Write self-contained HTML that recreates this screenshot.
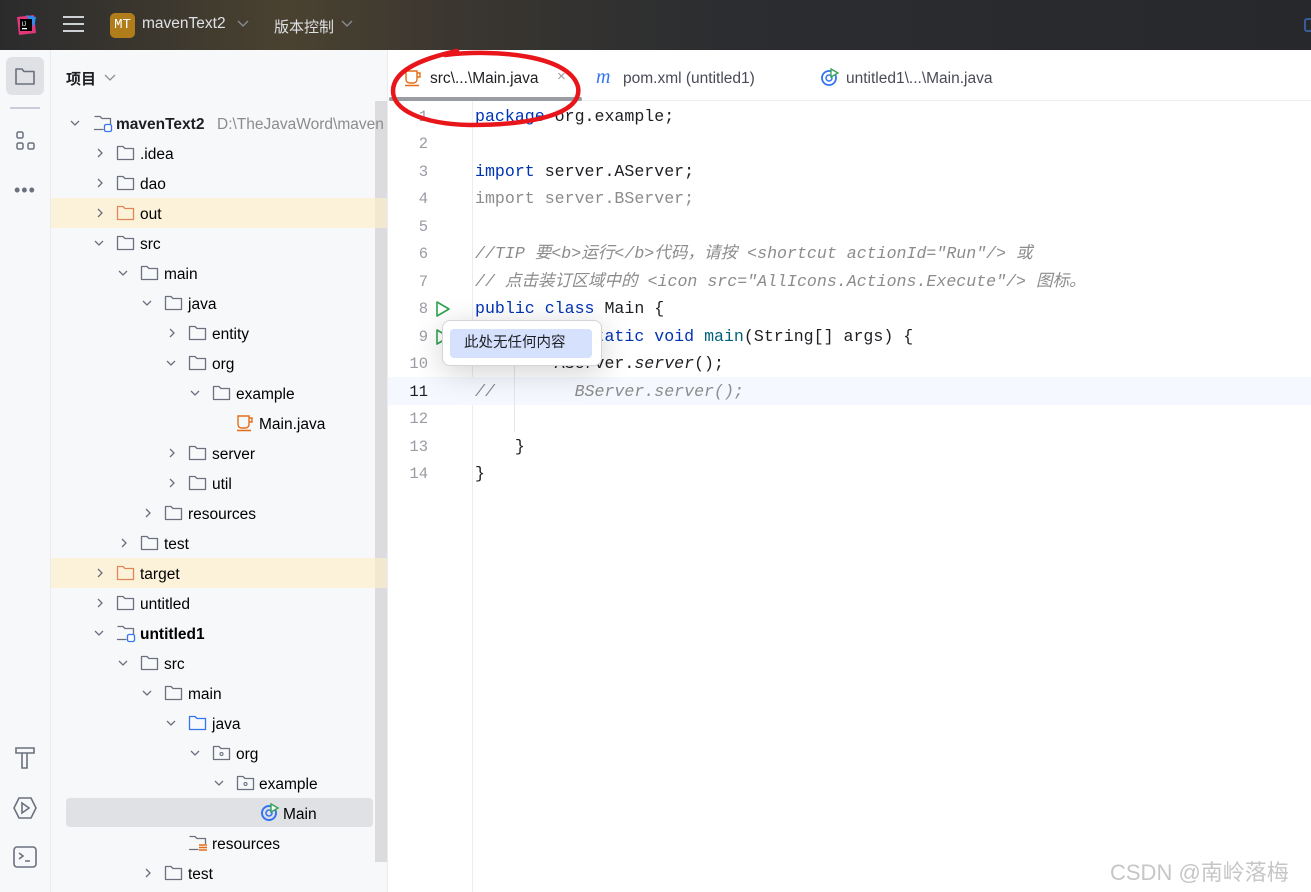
<!DOCTYPE html>
<html><head><meta charset="utf-8"><style>
*{margin:0;padding:0;box-sizing:border-box}
body{width:1311px;height:892px;overflow:hidden;position:relative;background:#fff;font-family:"Liberation Sans","Noto Sans CJK SC",sans-serif;font-size:15px;color:#1e1f22}
.top{position:absolute;left:0;top:0;width:1311px;height:50px;background:linear-gradient(90deg,#2b2b2d 0%,#4a4230 22%,#3a3630 35%,#2b2d30 55%,#27282c 100%)}
.abs{position:absolute}
.left{position:absolute;left:0;top:50px;width:51px;height:842px;background:#f7f8fa;border-right:1px solid #ebecf0}
.proj{position:absolute;left:51px;top:50px;width:337px;height:842px;background:#f7f8fa;border-right:1px solid #ebecf0}
.code{position:absolute;left:475px;font-family:"Liberation Mono","Noto Sans CJK SC",monospace;font-size:16.6px;white-space:pre;line-height:20px}
.ln{position:absolute;width:40px;left:388px;text-align:right;font-family:"Liberation Mono",monospace;font-size:15.5px;color:#9a9ca3;line-height:20px}
.kw{color:#0033b3}.cm{color:#8c8c8c;font-style:italic}.gr{color:#8c8c8c}.fn{color:#00627a}
</style></head><body>
<div class="top"></div>
<svg class="abs" style="left:14px;top:13px" width="24" height="24" viewBox="0 0 24 24"><path d="M3 4 L20 2 L22 20 L5 22Z" fill="#e2367a"/><path d="M12 2 L22 4 L20 14Z" fill="#2d8cf0"/><rect x="6" y="6" width="12" height="12" fill="#000"/><text x="7.5" y="13" font-size="6" fill="#fff" font-family="Liberation Sans">IJ</text><rect x="8" y="15" width="5" height="1.3" fill="#fff"/></svg>
<div class="abs" style="left:63px;top:16px;width:21px;height:2px;background:#ced0d6;box-shadow:0 7px 0 #ced0d6,0 14px 0 #ced0d6"></div>
<div class="abs" style="left:110px;top:13px;width:25px;height:25px;background:#b07d1a;border-radius:5px;color:#fff;font-family:'Liberation Mono';font-size:14px;line-height:25px;text-align:center">MT</div>
<div class="abs" style="left:142px;top:15px;color:#dfe1e5;font-size:15.5px">mavenText2</div>
<svg class="abs" style="left:237px;top:20px" width="12" height="8"><path d="M1 1 L6 6 L11 1" fill="none" stroke="#8c8f96" stroke-width="1.3"/></svg>
<div class="abs" style="left:274px;top:16px;color:#dfe1e5;font-size:15px">版本控制</div>
<svg class="abs" style="left:341px;top:20px" width="12" height="8"><path d="M1 1 L6 6 L11 1" fill="none" stroke="#8c8f96" stroke-width="1.3"/></svg>
<div class="abs" style="left:1304px;top:18px;width:10px;height:14px;border:2px solid #3b5a9a;border-radius:3px"></div>

<div class="left"></div>
<div class="abs" style="left:6px;top:57px;width:38px;height:38px;background:#dfe1e5;border-radius:6px"></div>
<svg class="abs" style="left:14px;top:66px" width="22" height="20" viewBox="0 0 22 20"><path d="M2 3 H8 L10 5.5 H20 V18 H2Z" fill="none" stroke="#6c707e" stroke-width="1.6" stroke-linejoin="round"/></svg>
<div class="abs" style="left:10px;top:107px;width:30px;height:2px;background:#c9ccd6"></div>
<svg class="abs" style="left:15px;top:130px" width="22" height="22" viewBox="0 0 22 22" fill="none" stroke="#6c707e" stroke-width="1.5"><rect x="2" y="2" width="6" height="6" rx="1.5"/><rect x="2" y="13" width="6" height="6" rx="1.5"/><rect x="13" y="13" width="6" height="6" rx="1.5"/></svg>
<div class="abs" style="left:14px;top:180px;color:#6c707e;font-size:18px;letter-spacing:1px">•••</div>
<svg class="abs" style="left:13px;top:745px" width="24" height="26" viewBox="0 0 24 26" fill="none" stroke="#6c707e" stroke-width="1.6"><path d="M3 3 H21 V8 H3Z M9 8 V23 H14 V8"/></svg>
<svg class="abs" style="left:12px;top:795px" width="26" height="26" viewBox="0 0 26 26" fill="none" stroke="#6c707e" stroke-width="1.6"><path d="M7 3 H19 L24 13 L19 23 H7 L2 13Z"/><path d="M10 8 L17 13 L10 18Z"/></svg>
<svg class="abs" style="left:13px;top:846px" width="24" height="22" viewBox="0 0 24 22" fill="none" stroke="#6c707e" stroke-width="1.6"><rect x="1" y="1" width="22" height="20" rx="3"/><path d="M6 7 L10 10 L6 13 M12 15 H17"/></svg>

<div class="proj"></div>
<div class="abs" style="left:66px;top:68px;font-weight:bold;font-size:15px">项目</div>
<svg class="abs" style="left:104px;top:74px" width="12" height="8"><path d="M1 1 L6 6 L11 1" fill="none" stroke="#8c8f96" stroke-width="1.3"/></svg>
<div class="abs" style="left:375px;top:101px;width:12px;height:761px;background:#dcdcde"></div>
<div class="abs" style="left:51px;top:198px;width:324px;height:30px;background:#fcf1d9"></div>
<div class="abs" style="left:375px;top:198px;width:12px;height:30px;background:#f2e8d0"></div>
<div class="abs" style="left:51px;top:558px;width:324px;height:30px;background:#fcf1d9"></div>
<div class="abs" style="left:375px;top:558px;width:12px;height:30px;background:#f2e8d0"></div>
<div class="abs" style="left:66px;top:798px;width:307px;height:29px;background:#dfe1e5;border-radius:4px"></div>

<svg class="abs" style="left:0;top:0" width="388" height="892" font-family="Liberation Sans" font-size="15.5">
<defs>
<g id="fd"><path d="M0.5 1.5 H6 L8 3.5 H16.5 V14.5 H0.5Z" fill="none" stroke="#6c707e" stroke-width="1.3" stroke-linejoin="round"/></g>
<g id="fo"><path d="M0.5 1.5 H6 L8 3.5 H16.5 V14.5 H0.5Z" fill="none" stroke="#e08855" stroke-width="1.3" stroke-linejoin="round"/></g>
<g id="fb"><path d="M0.5 1.5 H6 L8 3.5 H16.5 V14.5 H0.5Z" fill="none" stroke="#3574f0" stroke-width="1.3" stroke-linejoin="round"/></g>
<g id="fp"><path d="M0.5 1.5 H6 L8 3.5 H16.5 V14.5 H0.5Z" fill="none" stroke="#6c707e" stroke-width="1.3" stroke-linejoin="round"/><circle cx="8.5" cy="9" r="1.5" fill="none" stroke="#6c707e" stroke-width="1.1"/></g>
<g id="fm"><path d="M0.5 1.5 H6 L8 3.5 H16.5 V9 M9 14.5 H0.5Z" fill="none" stroke="#6c707e" stroke-width="1.3" stroke-linejoin="round"/><rect x="10.5" y="9.5" width="7" height="7" rx="1.5" fill="#fff" stroke="#3574f0" stroke-width="1.3"/></g>
<g id="fr"><path d="M0.5 1.5 H6 L8 3.5 H16.5 V9 M9 14.5 H0.5Z" fill="none" stroke="#6c707e" stroke-width="1.3" stroke-linejoin="round"/><path d="M10 10 H18 M10 12.5 H18 M10 15 H18" stroke="#e66d17" stroke-width="1.5"/></g>
<path id="cr" d="M0 -4 L4 0 L0 4" fill="none" stroke="#6c707e" stroke-width="1.3"/>
<path id="cd" d="M-4 -2 L0 2 L4 -2" fill="none" stroke="#6c707e" stroke-width="1.3"/>
</defs>
<use href="#cd" x="75" y="123"/><use href="#fm" x="94" y="115"/><text x="116" y="129" font-weight="bold" fill="#1e1f22">mavenText2</text><text x="217" y="129" fill="#8c8c8c">D:\TheJavaWord\maven</text>
<use href="#cr" x="98" y="153"/><use href="#fd" x="117" y="145"/><text x="140" y="159">.idea</text>
<use href="#cr" x="98" y="183"/><use href="#fd" x="117" y="175"/><text x="140" y="189">dao</text>
<use href="#cr" x="98" y="213"/><use href="#fo" x="117" y="205"/><text x="140" y="219">out</text>
<use href="#cd" x="99" y="243"/><use href="#fd" x="117" y="235"/><text x="140" y="249">src</text>
<use href="#cd" x="123" y="273"/><use href="#fd" x="141" y="265"/><text x="164" y="279">main</text>
<use href="#cd" x="147" y="303"/><use href="#fd" x="165" y="295"/><text x="188" y="309">java</text>
<use href="#cr" x="170" y="333"/><use href="#fd" x="189" y="325"/><text x="212" y="339">entity</text>
<use href="#cd" x="171" y="363"/><use href="#fd" x="189" y="355"/><text x="212" y="369">org</text>
<use href="#cd" x="195" y="393"/><use href="#fd" x="213" y="385"/><text x="236" y="399">example</text>
<g transform="translate(237,414)" fill="none" stroke="#e66d17" stroke-width="1.4"><path d="M1 2 H12 V10 Q12 14 8 14 H5 Q1 14 1 10Z M12 4 H15 V8 H12 M0 16.5 H14"/></g><text x="259" y="429">Main.java</text>
<use href="#cr" x="170" y="453"/><use href="#fd" x="189" y="445"/><text x="212" y="459">server</text>
<use href="#cr" x="170" y="483"/><use href="#fd" x="189" y="475"/><text x="212" y="489">util</text>
<use href="#cr" x="146" y="513"/><use href="#fd" x="165" y="505"/><text x="188" y="519">resources</text>
<use href="#cr" x="122" y="543"/><use href="#fd" x="141" y="535"/><text x="164" y="549">test</text>
<use href="#cr" x="98" y="573"/><use href="#fo" x="117" y="565"/><text x="140" y="579">target</text>
<use href="#cr" x="98" y="603"/><use href="#fd" x="117" y="595"/><text x="140" y="609">untitled</text>
<use href="#cd" x="99" y="633"/><use href="#fm" x="117" y="625"/><text x="140" y="639" font-weight="bold">untitled1</text>
<use href="#cd" x="123" y="663"/><use href="#fd" x="141" y="655"/><text x="164" y="669">src</text>
<use href="#cd" x="147" y="693"/><use href="#fd" x="165" y="685"/><text x="188" y="699">main</text>
<use href="#cd" x="171" y="723"/><use href="#fb" x="189" y="715"/><text x="212" y="729">java</text>
<use href="#cd" x="195" y="753"/><use href="#fp" x="213" y="745"/><text x="236" y="759">org</text>
<use href="#cd" x="219" y="783"/><use href="#fp" x="237" y="775"/><text x="259" y="789">example</text>
<g transform="translate(261,803)"><circle cx="8" cy="10" r="7" fill="none" stroke="#3574f0" stroke-width="2"/><circle cx="8" cy="10" r="3" fill="none" stroke="#3574f0" stroke-width="1.6"/><path d="M10 1 L17 5 L10 9Z" fill="#fff" stroke="#2ea44f" stroke-width="1.4"/></g><text x="283" y="819">Main</text>
<use href="#fr" x="189" y="835"/><text x="212" y="849">resources</text>
<use href="#cr" x="146" y="873"/><use href="#fd" x="165" y="865"/><text x="188" y="879">test</text>
</svg>

<!-- tabs -->
<div class="abs" style="left:388px;top:100px;width:923px;height:1px;background:#ebecf0"></div>
<div class="abs" style="left:389px;top:97px;width:193px;height:4px;background:#9a9ca3;border-radius:2px"></div>
<svg class="abs" style="left:405px;top:69px" width="18" height="18" viewBox="0 0 18 18" fill="none" stroke="#e66d17" stroke-width="1.4"><path d="M1 2 H12 V10 Q12 14 8 14 H5 Q1 14 1 10Z M12 4 H15 V8 H12 M0 16.5 H14"/></svg>
<div class="abs" style="left:430px;top:70px;font-size:15.5px">src\...\Main.java</div>
<div class="abs" style="left:557px;top:68px;font-size:15px;color:#9a9ca3">×</div>
<div class="abs" style="left:596px;top:66px;font-size:20px;font-style:italic;color:#3574f0;font-family:'Liberation Serif'">m</div>
<div class="abs" style="left:623px;top:70px;font-size:15.5px;color:#494b57">pom.xml (untitled1)</div>
<svg class="abs" style="left:821px;top:68px" width="19" height="19"><circle cx="8" cy="10" r="7" fill="none" stroke="#3574f0" stroke-width="1.8"/><circle cx="8" cy="10" r="3" fill="none" stroke="#3574f0" stroke-width="1.5"/><path d="M10 1 L17 5 L10 9Z" fill="#fff" stroke="#2ea44f" stroke-width="1.3"/></svg>
<div class="abs" style="left:846px;top:70px;font-size:15.5px;color:#494b57">untitled1\...\Main.java</div>

<!-- editor -->
<div class="abs" style="left:472px;top:101px;width:1px;height:791px;background:#ebecf0"></div>
<div class="abs" style="left:388px;top:377px;width:923px;height:28px;background:#f5f8fe"></div>
<div class="abs" style="left:514px;top:350px;width:1px;height:82px;background:#e6e6e6"></div>
<div class="ln" style="top:107px">1</div><div class="ln" style="top:134px">2</div><div class="ln" style="top:162px">3</div><div class="ln" style="top:189px">4</div><div class="ln" style="top:217px">5</div><div class="ln" style="top:244px">6</div><div class="ln" style="top:272px">7</div><div class="ln" style="top:299px">8</div><div class="ln" style="top:327px">9</div><div class="ln" style="top:354px">10</div><div class="ln" style="top:382px;color:#1e1f22">11</div><div class="ln" style="top:409px">12</div><div class="ln" style="top:437px">13</div><div class="ln" style="top:464px">14</div>
<svg class="abs" style="left:435px;top:300px" width="16" height="18"><path d="M2 2 L14 9 L2 16Z" fill="none" stroke="#2ea44f" stroke-width="1.6" stroke-linejoin="round"/></svg>
<svg class="abs" style="left:435px;top:328px" width="16" height="18"><path d="M2 2 L14 9 L2 16Z" fill="none" stroke="#2ea44f" stroke-width="1.6" stroke-linejoin="round"/></svg>
<div class="code" style="top:107px"><span class="kw">package</span> org.example;</div>
<div class="code" style="top:162px"><span class="kw">import</span> server.AServer;</div>
<div class="code gr" style="top:189px">import server.BServer;</div>
<div class="code cm" style="top:244px">//TIP 要&lt;b&gt;运行&lt;/b&gt;代码，请按 &lt;shortcut actionId="Run"/&gt; 或</div>
<div class="code cm" style="top:272px">// 点击装订区域中的 &lt;icon src="AllIcons.Actions.Execute"/&gt; 图标。</div>
<div class="code" style="top:299px"><span class="kw">public class</span> Main {</div>
<div class="code" style="top:327px">    <span class="kw">public static void</span> <span class="fn">main</span>(String[] args) {</div>
<div class="code" style="top:354px">        AServer.<i>server</i>();</div>
<div class="code cm" style="top:382px">//        BServer.server();</div>
<div class="code" style="top:437px">    }</div>
<div class="code" style="top:464px">}</div>

<!-- popup -->
<div class="abs" style="left:442px;top:320px;width:160px;height:46px;background:#fff;border:1px solid #d3d5db;border-radius:8px;box-shadow:0 6px 30px rgba(0,0,0,0.18)"></div>
<div class="abs" style="left:450px;top:329px;width:142px;height:29px;background:#d5e1fd;border-radius:4px;font-size:14.5px;line-height:29px;padding-left:14px">此处无任何内容</div>

<!-- red circle -->
<svg class="abs" style="left:385px;top:45px" width="210" height="90"><path d="M60 10 C110 4 185 10 193 42 C198 68 150 80 85 80 C35 79 8 64 8 46 C8 26 35 14 72 6" fill="none" stroke="#e8161b" stroke-width="4.5" stroke-linecap="round"/></svg>

<div class="abs" style="left:1110px;top:855px;font-size:22px;color:#c0c0c0;opacity:.9">CSDN @南岭落梅</div>
</body></html>
